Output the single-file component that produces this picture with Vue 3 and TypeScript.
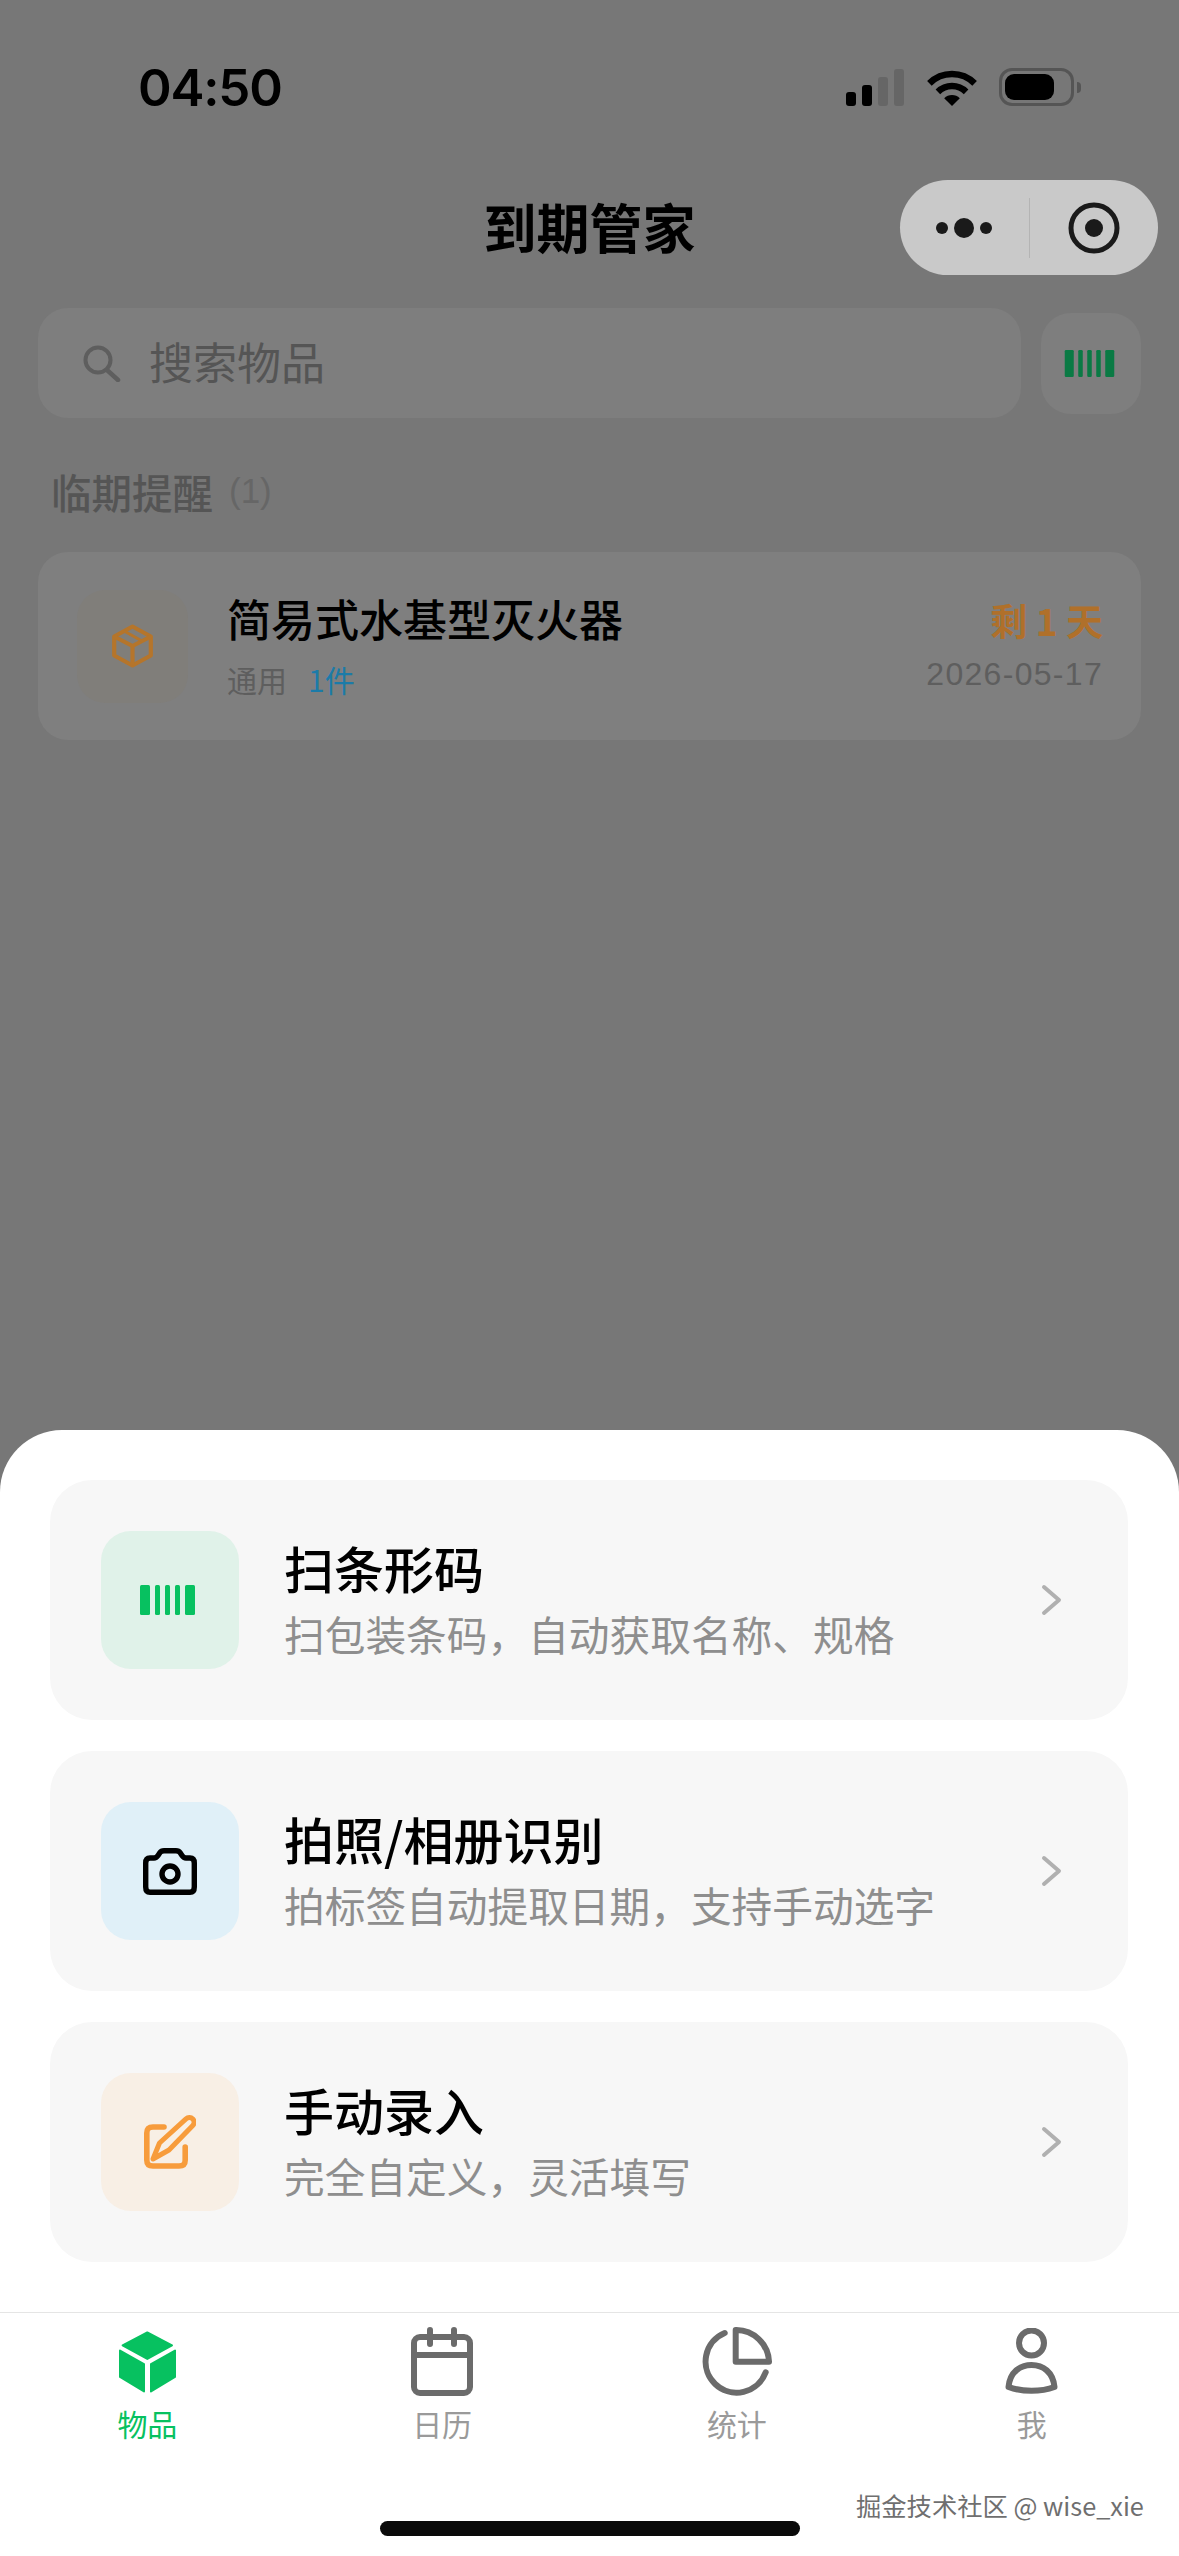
<script setup lang="ts">
interface Action {
  kind: 'scan' | 'camera' | 'edit'
  title: string
  desc: string
}
interface Tab {
  kind: 'box' | 'calendar' | 'stats' | 'user'
  label: string
}

const actions: Action[] = [
  { kind: 'scan', title: '扫条形码', desc: '扫包装条码，自动获取名称、规格' },
  { kind: 'camera', title: '拍照/相册识别', desc: '拍标签自动提取日期，支持手动选字' },
  { kind: 'edit', title: '手动录入', desc: '完全自定义，灵活填写' },
]
const tabs: Tab[] = [
  { kind: 'box', label: '物品' },
  { kind: 'calendar', label: '日历' },
  { kind: 'stats', label: '统计' },
  { kind: 'user', label: '我' },
]
</script>

<template>
  <div class="page">
    <header class="status">
      <span class="time">04:50</span>
      <div class="status-icons">
        <svg class="signal" viewBox="0 0 58 37" width="58" height="37">
          <rect x="0" y="23" width="10" height="14" rx="3" fill="#000" />
          <rect x="16" y="16" width="10" height="21" rx="3" fill="#000" />
          <rect x="32" y="8" width="10" height="29" rx="3" fill="#666" />
          <rect x="48" y="0" width="10" height="37" rx="3" fill="#666" />
        </svg>
        <svg class="wifi" viewBox="0 0 50 37" width="50" height="37">
          <path d="M2.4 14.4A32 32 0 0 1 47.6 14.4" fill="none" stroke="#000" stroke-width="6.5" />
          <path d="M10.9 22.9A20 20 0 0 1 39.1 22.9" fill="none" stroke="#000" stroke-width="6.5" />
          <path d="M25 37L17.2 29.2A11 11 0 0 1 32.8 29.2Z" fill="#000" />
        </svg>
        <div class="battery"><div class="battery-level"></div></div>
        <div class="battery-cap"></div>
      </div>
    </header>

    <nav class="nav">
      <h1 class="nav-title">到期管家</h1>
      <div class="capsule">
        <div class="capsule-part">
          <svg viewBox="0 0 56 20" width="56" height="20">
            <circle cx="6" cy="10" r="6" fill="#1a1a1a" />
            <circle cx="28" cy="10" r="10" fill="#1a1a1a" />
            <circle cx="50" cy="10" r="6" fill="#1a1a1a" />
          </svg>
        </div>
        <div class="capsule-line"></div>
        <div class="capsule-part">
          <svg viewBox="0 0 52 52" width="52" height="52">
            <circle cx="26" cy="26" r="23" fill="none" stroke="#1a1a1a" stroke-width="5" />
            <circle cx="26" cy="26" r="9" fill="#1a1a1a" />
          </svg>
        </div>
      </div>
    </nav>

    <section class="search-row">
      <div class="search">
        <svg viewBox="0 0 38 37" width="38" height="37">
          <circle cx="15" cy="15" r="12.5" fill="none" stroke="#5e5e5e" stroke-width="4" />
          <path d="M24 25L35 35" fill="none" stroke="#5e5e5e" stroke-width="4.5" stroke-linecap="round" />
        </svg>
        <span class="placeholder">搜索物品</span>
      </div>
      <div class="scan-btn">
        <svg class="scan-bars" viewBox="0 0 55 30" width="51" height="27">
          <rect x="0" y="0" width="10" height="30" rx="1.5" fill="#0a7a44" />
          <rect x="15" y="0" width="5" height="30" rx="1.5" fill="#0a7a44" />
          <rect x="25" y="0" width="5" height="30" rx="1.5" fill="#0a7a44" />
          <rect x="35" y="0" width="5" height="30" rx="1.5" fill="#0a7a44" />
          <rect x="45" y="0" width="10" height="30" rx="1.5" fill="#0a7a44" />
        </svg>
      </div>
    </section>

    <div class="section-head">
      <span class="section-title">临期提醒</span>
      <span class="section-count">(1)</span>
    </div>

    <article class="item">
      <div class="item-icon">
        <svg viewBox="0 0 41 44" width="41" height="44" fill="none" stroke="#b5752b" stroke-width="4.2" stroke-linejoin="round">
          <path d="M20.5 2.500L38.800 12.500V31.500L20.500 41.500L2.200 31.500V12.500Z" />
          <path d="M2.200 12.500L20.500 22L38.800 12.500M20.500 22V41.500" />
          <path d="M12 7L30 17" stroke-width="3" />
        </svg>
      </div>
      <div class="item-main">
        <div class="item-name">简易式水基型灭火器</div>
        <div class="item-meta">
          <span class="item-cat">通用</span>
          <span class="item-qty">1件</span>
        </div>
      </div>
      <div class="item-side">
        <div class="item-left">剩 1 天</div>
        <div class="item-date">2026-05-17</div>
      </div>
    </article>

    <section class="sheet">
      <div v-for="a in actions" :key="a.kind" class="action">
        <div class="action-icon" :class="a.kind">
          <svg v-if="a.kind === 'scan'" class="scan-glyph" viewBox="0 0 55 30" width="55" height="30">
            <rect x="0" y="0" width="10" height="30" rx="1.5" fill="#07c160" />
            <rect x="15" y="0" width="5" height="30" rx="1.5" fill="#07c160" />
            <rect x="25" y="0" width="5" height="30" rx="1.5" fill="#07c160" />
            <rect x="35" y="0" width="5" height="30" rx="1.5" fill="#07c160" />
            <rect x="45" y="0" width="10" height="30" rx="1.5" fill="#07c160" />
          </svg>
          <svg v-else-if="a.kind === 'camera'" viewBox="0 0 54 47" width="54" height="47" fill="none" stroke="#000" stroke-width="5.400" stroke-linejoin="round">
            <path d="M7 10H11C13 10 14 9 15 7.500L17 4.500C18 3 19 2.700 21 2.700H33C35 2.700 36 3 37 4.500L39 7.500C40 9 41 10 43 10H47C50 10 51.300 12 51.300 15V39C51.300 42.500 50 44.300 47 44.300H7C4 44.300 2.700 42.500 2.700 39V15C2.700 12 4 10 7 10Z" />
            <circle cx="27" cy="26" r="8" />
          </svg>
          <svg v-else viewBox="0 0 52 54" width="52" height="54" fill="none" stroke="#f79c3c" stroke-linecap="round" stroke-linejoin="round">
            <path d="M20 12H9C4.500 12 2.800 14 2.800 18V45C2.800 49 4.500 51 9 51H35C39.500 51 41.200 49 41.200 45V32" stroke-width="5.600" />
            <path d="M42 3.800C44 2 47 2.200 48.800 4C50.600 6 50.400 8.600 48.800 10.500L25 35L9 44L15.500 28Z" stroke-width="5" />
          </svg>
        </div>
        <div class="action-text">
          <div class="action-title">{{ a.title }}</div>
          <div class="action-desc">{{ a.desc }}</div>
        </div>
        <svg class="chevron" viewBox="0 0 21 32" width="21" height="32">
          <path d="M3 3L18 16L3 29" fill="none" stroke="#b0b0b0" stroke-width="4" stroke-linecap="round" stroke-linejoin="round" />
        </svg>
      </div>
    </section>

    <footer class="tabbar">
      <div v-for="(t, i) in tabs" :key="t.kind" class="tab" :class="{ active: i === 0 }">
        <div class="tab-icon">
          <svg v-if="t.kind === 'box'" viewBox="0 0 57 62" width="57" height="62" fill="#07c160" stroke="#07c160" stroke-width="2" stroke-linejoin="round">
            <path d="M28.300 1.500L53 14.300L28.300 28L3.600 14.300Z" />
            <path d="M1 19.500L25 33V60.500L1 46Z" />
            <path d="M32 33L56 19.500V46L32 60.500Z" />
          </svg>
          <svg v-else-if="t.kind === 'calendar'" viewBox="0 0 62 69" width="62" height="69" fill="none" stroke="#6b6b6b" stroke-width="6" stroke-linecap="round" stroke-linejoin="round">
            <rect x="3" y="10" width="56" height="56" rx="6" />
            <path d="M3 28H59" />
            <path d="M19 3V17M43 3V17" />
          </svg>
          <svg v-else-if="t.kind === 'stats'" viewBox="0 0 70 69" width="70" height="69" fill="none" stroke="#6b6b6b" stroke-width="6" stroke-linecap="round" stroke-linejoin="round">
            <path d="M22.700 6A31 31 0 1 0 63.700 45.300" />
            <path d="M33.700 3V34.700H67A33 33 0 0 0 33.700 3Z" />
          </svg>
          <svg v-else viewBox="0 0 53 67" width="53" height="67" fill="none" stroke="#6b6b6b" stroke-width="6" stroke-linecap="round" stroke-linejoin="round">
            <circle cx="26.500" cy="15" r="12.500" />
            <path d="M3.500 59C5 44 15 37 26.500 37C38 37 48 44 49.500 59C36 64 17 64 3.500 59Z" />
          </svg>
        </div>
        <span class="tab-label">{{ t.label }}</span>
      </div>
    </footer>

    <span class="watermark">掘金技术社区 @ wise_xie</span>
    <div class="home-bar"></div>
  </div>
</template>

<style scoped>
.page {
  position: relative;
  width: 1179px;
  height: 2556px;
  overflow: hidden;
  display: flex;
  flex-direction: column;
  background: #777777;
  color: #000;
  font-family: "Noto Sans CJK SC", "Liberation Sans", sans-serif;
}

.status {
  height: 180px;
  box-sizing: border-box;
  padding: 60px 98px 0 138px;
  display: flex;
  justify-content: space-between;
  align-items: flex-start;
}
.time {
  font-family: Inter, "Liberation Sans", sans-serif;
  font-weight: 600;
  font-size: 51px;
  line-height: 56px;
  letter-spacing: -1.2px;
}
.status-icons {
  display: flex;
  align-items: center;
  padding-top: 8px;
}
.signal { margin-right: 23px; }
.wifi { margin-right: 22px; }
.battery {
  width: 75px;
  height: 38px;
  box-sizing: border-box;
  border: 3px solid #555;
  border-radius: 13px;
  padding: 3px;
}
.battery-level {
  width: 49px;
  height: 100%;
  background: #000;
  border-radius: 9px;
}
.battery-cap {
  width: 4px;
  height: 11px;
  margin-left: 3px;
  background: #555;
  border-radius: 0 4px 4px 0;
}

.nav {
  height: 95px;
  flex: none;
  display: grid;
  grid-template-columns: 1fr auto 1fr;
  align-items: center;
}
.nav-title {
  grid-column: 2;
  margin: 0;
  font-size: 53px;
  line-height: 95px;
  font-weight: 700;
  transform: translateY(-1px);
}
.capsule {
  grid-column: 3;
  justify-self: end;
  margin-right: 21px;
  width: 258px;
  height: 95px;
  background: #c9c9c9;
  border-radius: 48px;
  display: flex;
  align-items: center;
}
.capsule-part {
  flex: 1;
  display: flex;
  justify-content: center;
  align-items: center;
}
.capsule-line {
  width: 1px;
  height: 60px;
  background: #b4b4b4;
}

.search-row {
  margin-top: 33px;
  padding: 0 38px;
  display: flex;
  align-items: center;
  gap: 20px;
}
.search {
  flex: 1;
  height: 110px;
  box-sizing: border-box;
  padding-left: 45px;
  background: #7e7e7e;
  border-radius: 30px;
  display: flex;
  align-items: center;
  gap: 28px;
}
.placeholder {
  font-size: 44px;
  line-height: 60px;
  color: #555;
  margin-top: -5px;
}
.scan-btn {
  width: 100px;
  height: 101px;
  background: #7e7e7e;
  border-radius: 30px;
  display: flex;
  align-items: center;
  justify-content: center;
}
.scan-bars { margin-right: 3px; }

.section-head {
  margin-top: 43px;
  padding-left: 51px;
  display: flex;
  align-items: center;
  gap: 16px;
  height: 60px;
}
.section-title {
  font-size: 40.5px;
  font-weight: 500;
  color: #555;
}
.section-count {
  font-size: 35px;
  font-family: "Liberation Sans", sans-serif;
  color: #666;
}

.item {
  margin: 31px 38px 0;
  height: 188px;
  box-sizing: border-box;
  padding: 0 38px 0 39px;
  background: #7f7f7f;
  border-radius: 30px;
  display: flex;
  align-items: center;
}
.item-icon {
  width: 111px;
  height: 113px;
  background: #807e7a;
  border-radius: 28px;
  display: flex;
  align-items: center;
  justify-content: center;
}
.item-main {
  margin-left: 39px;
  flex: 1;
}
.item-name {
  font-size: 44px;
  line-height: 60px;
  font-weight: 500;
  margin-top: -3px;
}
.item-meta {
  margin-top: 9px;
  font-size: 30px;
  line-height: 44px;
  display: flex;
  gap: 21px;
}
.item-cat { color: #5e5e5e; }
.item-qty { color: #1b7ba8; }
.item-side { text-align: right; }
.item-left {
  font-size: 37px;
  line-height: 56px;
  font-weight: 700;
  color: #b0702a;
  margin-top: -4px;
}
.item-date {
  margin-top: 4px;
  font-family: "Liberation Sans", sans-serif;
  font-size: 32px;
  line-height: 44px;
  letter-spacing: 1.3px;
  color: #5e5e5e;
}

.sheet {
  margin-top: auto;
  height: 882px;
  box-sizing: border-box;
  padding: 50px 51px 0 50px;
  background: #fff;
  border-radius: 62px 62px 0 0;
  display: flex;
  flex-direction: column;
  gap: 31px;
}
.action {
  height: 240px;
  flex: none;
  box-sizing: border-box;
  padding: 0 66px 0 51px;
  background: #f7f7f7;
  border-radius: 42px;
  display: flex;
  align-items: center;
}
.action-icon {
  width: 138px;
  height: 138px;
  flex: none;
  border-radius: 30px;
  display: flex;
  align-items: center;
  justify-content: center;
}
.action-icon.scan { background: #e0f2e9; }
.action-icon.camera { background: #e0f0f8; }
.action-icon.edit { background: #f8efe5; }
.scan-glyph { margin-right: 5px; }
.action-text {
  margin-left: 45px;
  flex: 1;
}
.action-title {
  font-size: 50px;
  line-height: 60px;
  font-weight: 500;
}
.action-desc {
  margin-top: 7px;
  font-size: 40.7px;
  line-height: 60px;
  color: #8e8e8e;
}

.tabbar {
  flex: none;
  height: 244px;
  box-sizing: border-box;
  padding-top: 14px;
  background: #fff;
  border-top: 1px solid #e5e5e5;
  display: grid;
  grid-template-columns: repeat(4, 1fr);
}
.tab {
  display: flex;
  flex-direction: column;
  align-items: center;
  gap: 7px;
}
.tab-icon {
  height: 69px;
  display: flex;
  align-items: center;
  justify-content: center;
}
.tab-label {
  font-size: 30px;
  line-height: 40px;
  color: #9a9a9a;
}
.tab.active .tab-label { color: #07c160; }

.watermark {
  position: absolute;
  left: 856px;
  top: 2487px;
  font-size: 25.3px;
  line-height: 36px;
  white-space: nowrap;
  color: #6f6f6f;
}
.home-bar {
  position: absolute;
  left: 380px;
  top: 2521px;
  width: 420px;
  height: 15px;
  border-radius: 8px;
  background: #0a0a0a;
}
</style>

<style>
html, body {
  margin: 0;
  background: #777777;
}
</style>
